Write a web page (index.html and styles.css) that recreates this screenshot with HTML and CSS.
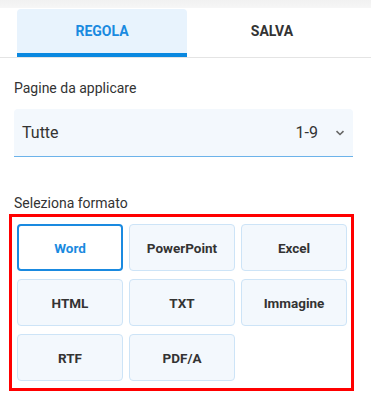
FILE: index.html
```html
<!DOCTYPE html>
<html lang="it">
<head>
<meta charset="utf-8">
<link rel="stylesheet" href="styles.css">
</head>
<body>
<div class="topbar"></div>
<div class="tabs">
  <div class="tab active">REGOLA</div>
  <div class="tab">SALVA</div>
</div>
<div class="content">
  <div class="label first">Pagine da applicare</div>
  <div class="select">
    <span class="sel-text">Tutte</span>
    <span class="sel-range">1-9</span>
    <svg class="chev" width="10" height="6" viewBox="0 0 10 6"><path d="M1.5 1.2 L5 4.5 L8.5 1.2" fill="none" stroke="#666" stroke-width="1.6"/></svg>
  </div>
  <div class="label second">Seleziona formato</div>
</div>
<div class="formats">
  <div class="grid">
    <div class="fmt selected">Word</div>
    <div class="fmt">PowerPoint</div>
    <div class="fmt">Excel</div>
    <div class="fmt">HTML</div>
    <div class="fmt">TXT</div>
    <div class="fmt">Immagine</div>
    <div class="fmt">RTF</div>
    <div class="fmt">PDF/A</div>
  </div>
</div>
</body>
</html>
```
FILE: styles.css
```css
html, body {
  margin: 0;
  padding: 0;
  background: #fff;
  font-family: Roboto, "Liberation Sans", sans-serif;
  color: #333;
}
.topbar {
  height: 8px;
  background: linear-gradient(#f1f1f1, #f6f6f6);
}
.tabs {
  display: flex;
  padding: 1px 0 0 17px;
  border-bottom: 1px solid #e4e4e4;
}
.tab {
  width: 170px;
  height: 48px;
  box-sizing: border-box;
  display: flex;
  align-items: center;
  justify-content: center;
  padding-bottom: 4px;
  font-size: 14px;
  font-weight: 700;
  color: #333;
  border-radius: 4px 4px 0 0;
}
.tab.active {
  background: #e8f3fd;
  color: #1a8ae0;
  border-bottom: 4px solid #0a88e0;
  padding-bottom: 0;
}
.content {
  padding: 0 18px 0 14px;
}
.label {
  font-size: 14px;
  line-height: 20px;
  color: #333;
}
.label.first {
  margin-top: 20px;
}
.label.second {
  margin-top: 36px;
}
.select {
  margin-top: 11px;
  height: 48px;
  box-sizing: border-box;
  background: #f3f8fd;
  border-bottom: 1px solid #6cb3ea;
  border-radius: 4px 4px 0 0;
  display: flex;
  align-items: center;
  padding: 0 8px 0 8px;
  font-size: 16px;
  color: #333;
}
.sel-text {
  flex: 1;
}
.sel-range {
  margin-right: 17px;
}
.formats {
  margin: 1px 17px 0 9px;
  border: 3px solid #ff0000;
  padding: 7px 0 7px 5px;
}
.grid {
  display: grid;
  grid-template-columns: repeat(3, 106px);
  grid-auto-rows: 47px;
  column-gap: 6px;
  row-gap: 8px;
}
.fmt {
  box-sizing: border-box;
  border: 1px solid #cde4f7;
  background: #f3f8fd;
  border-radius: 4px;
  display: flex;
  align-items: center;
  justify-content: center;
  font-size: 13.5px;
  font-weight: 700;
  color: #333;
}
.fmt.selected {
  background: #fff;
  border: 2px solid #1a8ae0;
  color: #1a8ae0;
}
```
